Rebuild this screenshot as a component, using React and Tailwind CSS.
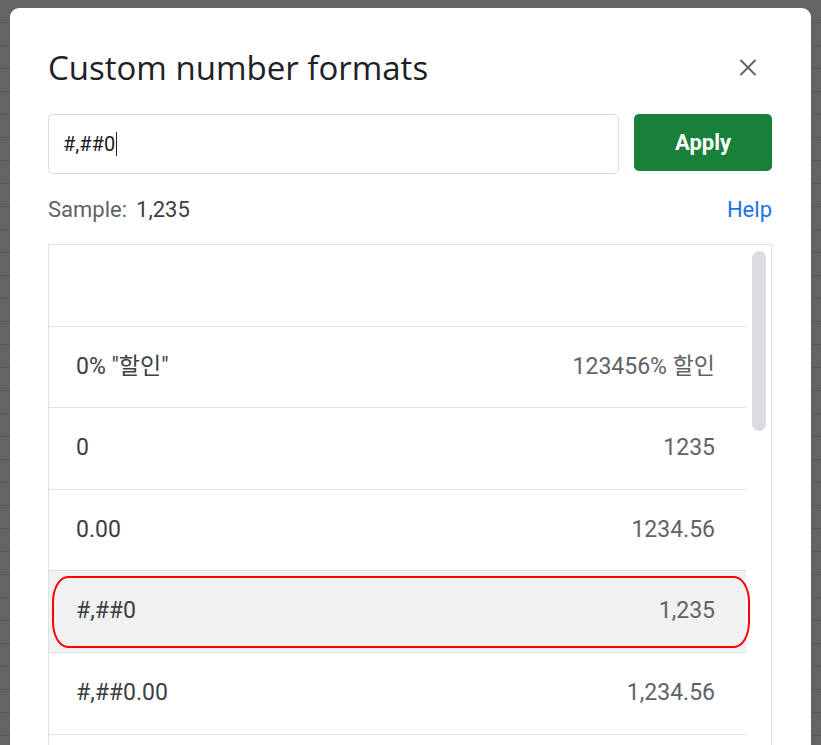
import { X } from 'lucide-react';

const rows = [
  { fmt: '', sample: '' },
  { fmt: '0% "할인"', sample: '123456% 할인' },
  { fmt: '0', sample: '1235' },
  { fmt: '0.00', sample: '1234.56' },
  { fmt: '#,##0', sample: '1,235', active: true },
  { fmt: '#,##0.00', sample: '1,234.56' },
  { fmt: '', sample: '' },
];

const font = { fontFamily: 'Roboto, "Noto Sans CJK KR", sans-serif' };

const FormatRow = ({ fmt, sample, active }) => (
  <div
    className={`relative h-[81.6px] shrink-0 flex items-center justify-between pl-[27px] pr-[31px] border-b border-[#e0e0e0] ${active ? 'bg-[#f1f1f1]' : 'bg-white'}`}
  >
    <span className="text-[23px] text-[#3c4043]">{fmt}</span>
    <span className="text-[23px] text-[#5f6368]">{sample}</span>
    {active && (
      <span className="absolute left-[3px] right-[-4px] top-[5px] bottom-[4px] border-2 border-[#ff0000] rounded-[16px/26px] pointer-events-none" />
    )}
  </div>
);

export default function App() {
  return (
    <div
      className="w-[821px] h-[745px] overflow-hidden bg-[#646464] bg-[repeating-linear-gradient(to_bottom,transparent_0px,transparent_22px,#575757_22px,#575757_23px)] pt-[8px] pl-[10px]"
      style={font}
    >
      <div className="w-[801px] h-[760px] bg-white rounded-[9px] pl-[38px] pr-[39px] flex flex-col">
        {/* header */}
        <div className="flex items-center justify-between h-[118px] pt-[10px] pb-[10px]">
          <h1
            className="text-[33px] text-[#202124] leading-none"
            style={{ fontFamily: '"Open Sans", Roboto, sans-serif' }}
          >
            Custom number formats
          </h1>
          <button className="w-[28px] h-[28px] flex items-center justify-center text-[#5f6368] mr-[10px]">
            <X className="w-[29px] h-[29px]" strokeWidth={1.6} />
          </button>
        </div>

        {/* input + apply */}
        <div className="flex items-start gap-[15px] -mt-[12px]">
          <div className="flex-1 h-[60px] border border-[#dadce0] rounded-[5px] flex items-center px-[14px]">
            <span className="text-[20px] text-[#202124]">#,##0</span>
            <span className="w-px h-[24px] bg-[#202124] ml-[1px]" />
          </div>
          <button className="w-[138px] h-[57px] bg-[#188038] rounded-[5px] text-white text-[22px] font-bold">
            Apply
          </button>
        </div>

        {/* sample */}
        <div className="flex items-center justify-between h-[70px]">
          <div className="text-[22px]">
            <span className="text-[#5f6368]">Sample:</span>
            <span className="text-[#3c4043] ml-[9px]">1,235</span>
          </div>
          <a className="text-[22px] text-[#1a73e8]">Help</a>
        </div>

        {/* list */}
        <div className="flex-1 border border-[#e0e0e0] flex overflow-hidden">
          <div className="flex-1 flex flex-col">
            {rows.map((r, i) => (
              <FormatRow key={i} {...r} />
            ))}
          </div>
          <div className="w-[25px] shrink-0 pt-[6px] flex justify-center">
            <div className="w-[14px] h-[180px] rounded-full bg-[#dadce0]" />
          </div>
        </div>
      </div>
    </div>
  );
}
